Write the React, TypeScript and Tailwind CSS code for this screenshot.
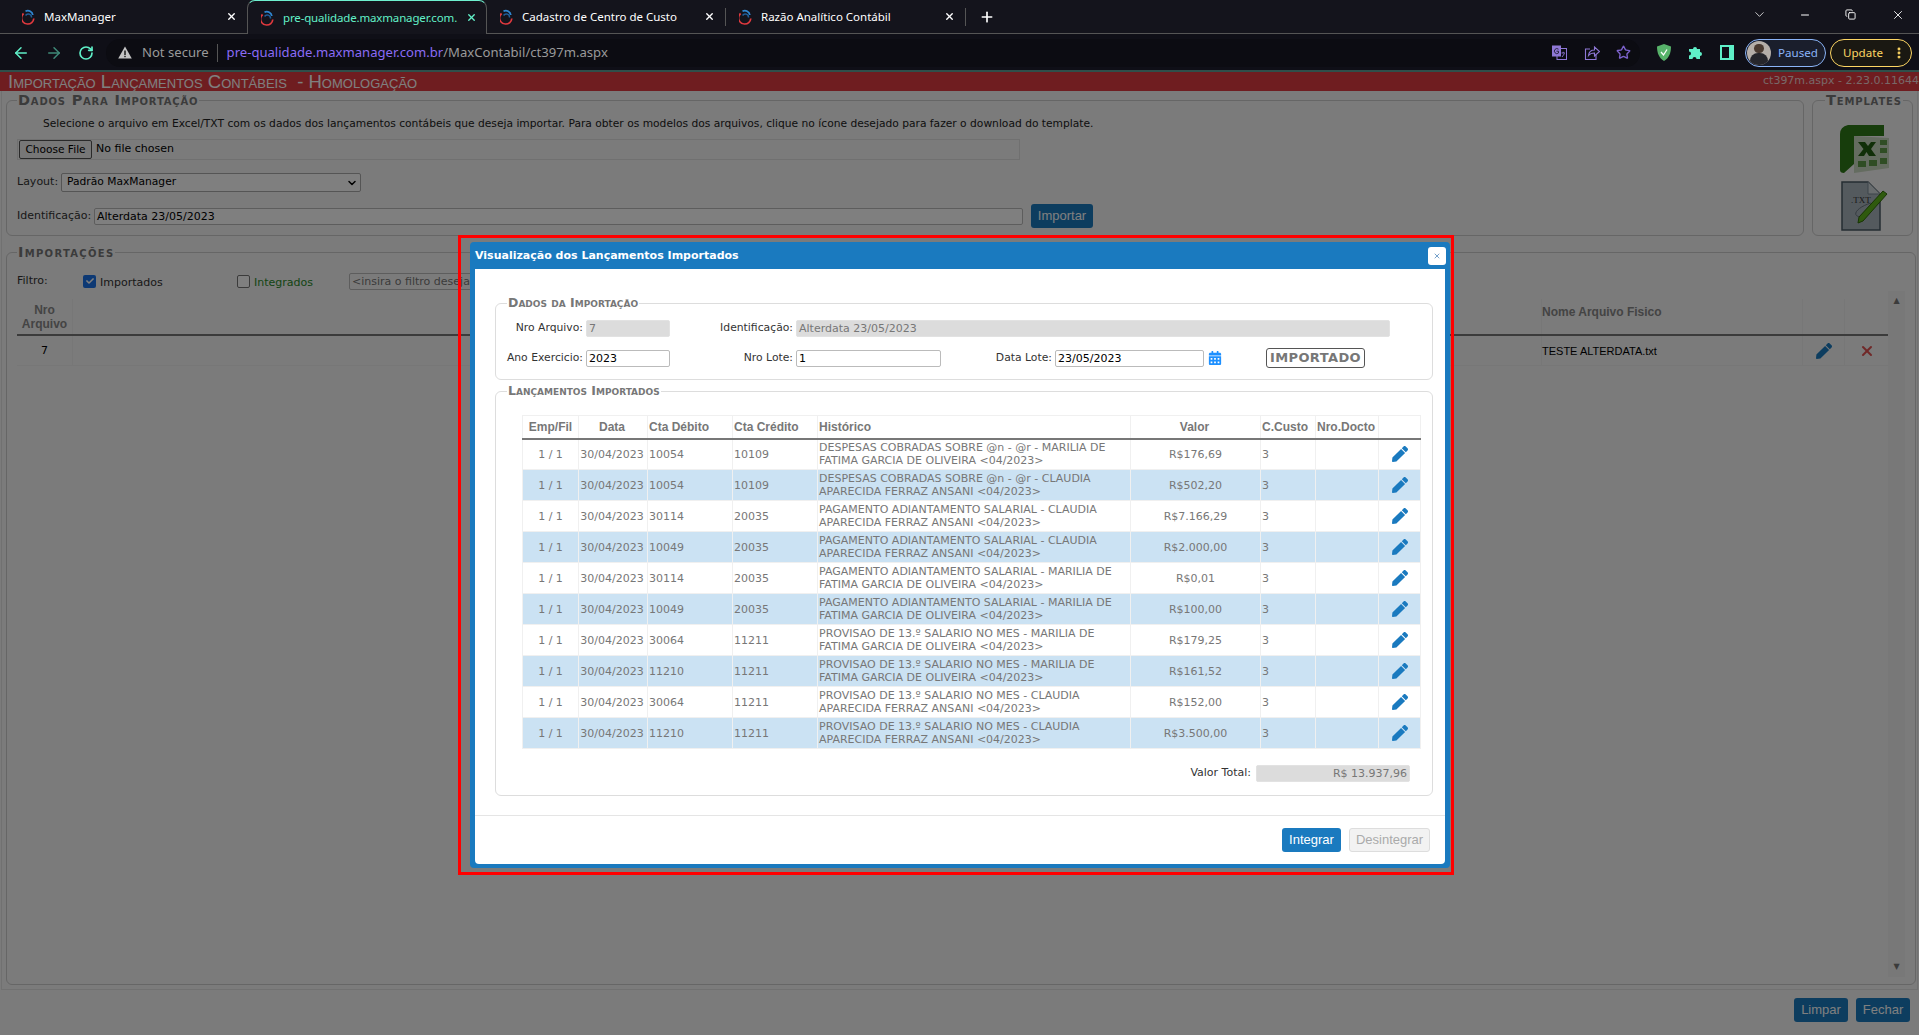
import { ArrowLeft, ArrowRight, RotateCw, Star, Plus, Minus, ChevronDown, X, Copy, EllipsisVertical } from "lucide-react"
import { FaPen, FaCalendarAlt, FaCheck } from "react-icons/fa"

const verdana = "font-['DejaVu_Sans',sans-serif]"

type Lanc = { deb: string; cred: string; hist: [string, string]; valor: string }

const marilia = "FATIMA GARCIA DE OLIVEIRA <04/2023>"
const claudia = "APARECIDA FERRAZ ANSANI <04/2023>"

const rows: Lanc[] = [
  { deb: "10054", cred: "10109", hist: ["DESPESAS COBRADAS SOBRE @n - @r - MARILIA DE", marilia], valor: "R$176,69" },
  { deb: "10054", cred: "10109", hist: ["DESPESAS COBRADAS SOBRE @n - @r - CLAUDIA", claudia], valor: "R$502,20" },
  { deb: "30114", cred: "20035", hist: ["PAGAMENTO ADIANTAMENTO SALARIAL - CLAUDIA", claudia], valor: "R$7.166,29" },
  { deb: "10049", cred: "20035", hist: ["PAGAMENTO ADIANTAMENTO SALARIAL - CLAUDIA", claudia], valor: "R$2.000,00" },
  { deb: "30114", cred: "20035", hist: ["PAGAMENTO ADIANTAMENTO SALARIAL - MARILIA DE", marilia], valor: "R$0,01" },
  { deb: "10049", cred: "20035", hist: ["PAGAMENTO ADIANTAMENTO SALARIAL - MARILIA DE", marilia], valor: "R$100,00" },
  { deb: "30064", cred: "11211", hist: ["PROVISAO DE 13.º SALARIO NO MES - MARILIA DE", marilia], valor: "R$179,25" },
  { deb: "11210", cred: "11211", hist: ["PROVISAO DE 13.º SALARIO NO MES - MARILIA DE", marilia], valor: "R$161,52" },
  { deb: "30064", cred: "11211", hist: ["PROVISAO DE 13.º SALARIO NO MES - CLAUDIA", claudia], valor: "R$152,00" },
  { deb: "11210", cred: "11211", hist: ["PROVISAO DE 13.º SALARIO NO MES - CLAUDIA", claudia], valor: "R$3.500,00" },
]

function Favicon() {
  return (
    <svg width="13" height="16" viewBox="0 0 13 16" fill="none" className="shrink-0">
      <path d="M3.5 2.2 A5 5 0 0 1 10.8 6" stroke="#2f86d0" strokeWidth="1.8" />
      <path d="M1.6 4.5 A6 6 0 0 0 5.5 15 A6 6 0 0 0 11.8 9.5" stroke="#e0393e" strokeWidth="1.7" />
      <path d="M9.5 8.5 A3.2 3.2 0 0 0 3.6 6.5" stroke="#1f5f9c" strokeWidth="1.5" />
    </svg>
  )
}

function Tab({ title, active, w, pl }: { title: string; active?: boolean; w: string; pl: string }) {
  return (
    <div className={`${w} ${pl} flex items-center relative ${active ? "h-[34px] bg-[#14141c] border-x border-t border-x-[#555] border-t-[#6ff0cf] rounded-t-lg pr-[9px]" : "h-[33px] pr-[10px]"}`}>
      <Favicon />
      <span className={`ml-[9px] text-[11.5px] flex-1 whitespace-nowrap font-['Noto_Sans',sans-serif] ${active ? "text-[#62f0c8] tracking-[-0.15px]" : "text-white"}`}>{title}</span>
      <X size={11} strokeWidth={3} className={active ? "text-[#62f0c8]" : "text-white"} />
    </div>
  )
}

function BrowserChrome() {
  return (
    <div className="shrink-0">
      <div className="h-[34px] bg-[#14141c] border-b border-[#555] flex items-start">
        <Tab title="MaxManager" w="w-[247px]" pl="pl-[22px]" />
        <Tab title="pre-qualidade.maxmanager.com." active w="w-[240px]" pl="pl-[13px]" />
        <Tab title="Cadastro de Centro de Custo" w="w-[238px]" pl="pl-[13px]" />
        <div className="w-px h-[18px] bg-[#555] mt-2" />
        <Tab title="Razão Analítico Contábil" w="w-[239px]" pl="pl-[13px]" />
        <div className="w-px h-[18px] bg-[#555] mt-2" />
        <Plus size={16} strokeWidth={2.5} className="text-white ml-[13px] mt-[9px]" />
        <div className="flex-1" />
        <div className="flex items-center text-white mt-[7px]">
          <ChevronDown size={15} strokeWidth={1.2} className="mr-[32px]" />
          <Minus size={12} className="mr-[34px]" />
          <Copy size={11} className="mr-[35px]" />
          <X size={14} strokeWidth={1.5} className="mr-[14px]" />
        </div>
      </div>
      <div className="h-[38px] bg-[#0f0f17] flex items-center pt-px border-b-2 border-[#2f4f4a]">
        <ArrowLeft size={18} className="text-[#5ff0c8] ml-[12px]" />
        <ArrowRight size={18} className="text-[#3f8a78] ml-[15px]" />
        <RotateCw size={16} strokeWidth={2.5} className="text-[#5ff0c8] ml-[15px]" />
        <div className="ml-[12px] w-[1534px] h-[28px] rounded-full bg-[#0c0c12] flex items-center pl-[12px]">
          <svg width="14" height="13" viewBox="0 0 14 13" className="shrink-0">
            <path d="M7 0.5 L13.8 12.5 H0.2 Z" fill="#c4c4c4" />
            <rect x="6.3" y="4.5" width="1.4" height="4.5" fill="#111" />
            <rect x="6.3" y="9.8" width="1.4" height="1.4" fill="#111" />
          </svg>
          <span className="ml-[10px] text-[13.1px] text-[#9a9a9a] font-['Noto_Sans',sans-serif]">Not secure</span>
          <div className="w-px h-[18px] bg-[#555] ml-[8px]" />
          <span className="ml-[9px] text-[13.1px] font-['Noto_Sans',sans-serif] text-[#9a9a9a]"><span className="text-[#8a6bf5]">pre-qualidade.maxmanager.com.br</span>/MaxContabil/ct397m.aspx</span>
          <div className="flex-1" />
          {/* translate */}
          <svg width="15" height="15" viewBox="0 0 15 15" className="mr-[17px]">
            <rect x="5" y="3.5" width="9.5" height="11" fill="none" stroke="#8f78d6" />
            <rect x="0" y="0.5" width="9" height="11" fill="#8f78d6" />
            <path d="M6.5 4.2 A2.5 2.5 0 1 0 6.5 8 V6.2 H4.5" fill="none" stroke="#2a2440" />
            <path d="M9.5 8 H13 M11.2 6.8 V8 M10 12 L12.5 8.5" fill="none" stroke="#8f78d6" strokeWidth="0.9" />
          </svg>
          {/* share */}
          <svg width="16" height="16" viewBox="0 0 16 16" fill="none" stroke="#8f78d6" strokeWidth="1.1" className="mr-[16px]">
            <path d="M6 4 H1.5 V14.5 H12 V10" />
            <path d="M4.5 10.5 C5 6.5 8 5 10.5 5 V2 L15.5 6.5 L10.5 11 V8 C8 8 6 8.5 4.5 10.5 Z" />
          </svg>
          <Star size={15} strokeWidth={2.2} className="text-[#7c62cc] mr-[9px]" />
        </div>
        <svg width="14" height="17" viewBox="0 0 14 17" className="ml-[17px]">
          <path d="M7 0 L14 2.5 C14 9 12 14 7 17 C2 14 0 9 0 2.5 Z" fill="#57b26a" />
          <path d="M4 8 L6.5 11 L10 5.5" stroke="#fff" strokeWidth="1.3" fill="none" />
        </svg>
        {/* extensions */}
        <svg width="15" height="15" viewBox="0 0 15 15" className="ml-[17px]">
          <path d="M1 4 H5 A2 2 0 1 1 9 4 H12 V7 A2 2 0 1 1 12 11 V14 H8.5 A2 2 0 1 0 4.5 14 H1 V10.5 A2 2 0 1 0 1 6.5 Z" fill="#5ff0c8" />
        </svg>
        <div className="ml-[17px] w-[14px] h-[15px] bg-[#5ff0c8] flex justify-start items-center pl-[2px]"><div className="w-[7px] h-[11px] bg-[#0f0f17]" /></div>
        <div className="ml-[11px] w-[81px] h-[28px] rounded-full border border-[#8ab4f8] bg-[#1a1e2c] flex items-center pl-[1px]">
          <div className="size-[24px] rounded-full bg-[#b5aea8] overflow-hidden flex flex-col items-center">
            <div className="size-[10px] rounded-full bg-[#4a3a30] mt-[3px]" />
            <div className="w-[18px] h-[12px] bg-[#26262c] rounded-t-lg" />
          </div>
          <span className="ml-[7px] text-[11.6px] text-[#8ab4f8] font-['Noto_Sans',sans-serif]">Paused</span>
        </div>
        <div className="ml-[4px] w-[82px] h-[28px] rounded-full border border-[#fdd663] bg-[#1a1812] flex items-center pl-[12px]">
          <span className="text-[11.6px] text-[#fdd663] font-['Noto_Sans',sans-serif]">Update</span>
          <EllipsisVertical size={14} strokeWidth={3} className="text-[#fdd663] ml-[9px]" />
        </div>
      </div>
    </div>
  )
}

function ExcelIcon() {
  return (
    <svg width="49" height="50" viewBox="0 0 49 50">
      <path d="M8 1 H44 V12 H14 V40 L4 49 Q0 49 0 46 V10 Q0 3 8 1 Z" fill="#2f7a18" />
      <path d="M14 12 L49 14 V44 L14 49 Z" fill="#c9d8c0" />
      <path d="M18 18 H25 L28 22 L31 18 H36 L31 25 L36 32 H29 L26.5 28 L24 32 H18 L23.5 25 Z" fill="#215f10" />
      <rect x="40" y="16" width="7" height="5" fill="#5f9a48" />
      <rect x="40" y="24" width="7" height="5" fill="#5f9a48" />
      <rect x="18" y="37" width="8" height="6" fill="#5f9a48" />
      <rect x="29" y="36" width="8" height="6" fill="#5f9a48" />
      <rect x="40" y="34" width="7" height="6" fill="#5f9a48" />
    </svg>
  )
}

function TxtIcon() {
  return (
    <svg width="47" height="50" viewBox="0 0 47 50">
      <path d="M1 1 H27 L39 13 V49 H1 Z" fill="#a8b4bc" stroke="#4a5a66" strokeWidth="1.5" />
      <path d="M27 1 V13 H39" fill="#d0d8dc" stroke="#7a8a94" />
      <text x="10" y="22" fontSize="9" fontFamily="Liberation Serif, serif" fill="#333">.TXT</text>
      <path d="M30 22 C16 26 8 36 22 36" fill="none" stroke="#6a7680" />
      <path d="M18 36 L42 10 L46 13 L22 40 L17 42 Z" fill="#5fb51c" stroke="#2f6a08" />
    </svg>
  )
}

function Legend({ children, size, ml }: { children: string; size: string; ml: string }) {
  return <legend className={`${size} ${ml} px-px leading-[14px] font-bold [font-variant:small-caps] text-[#777] ${verdana}`}>{children}</legend>
}

function Field({ value, w, disabled, right }: { value: string; w: string; disabled?: boolean; right?: boolean }) {
  return (
    <div className={`${w} h-[17px] rounded-[2px] px-[2px] text-[11px] leading-[15px] whitespace-nowrap overflow-hidden border ${disabled ? "bg-[#dcdcdc] border-[#e2e2e2] text-[#777]" : "bg-white border-[#bbb] text-black"} ${right ? "text-right" : ""}`}>{value}</div>
  )
}

function BackPage() {
  const btn = "w-[54px] h-[24px] rounded-[3px] bg-[#1a7abf] text-white text-center leading-[24px] text-[13px] font-['Liberation_Sans',sans-serif]"
  return (
    <div className={`h-full flex flex-col bg-[#f6f6f6] text-[11px] text-[#333] ${verdana}`}>
      <div className="h-[19px] bg-[#de3a40] flex items-center justify-between shrink-0">
        <span className="ml-[8px] text-[18.5px] leading-[19px] [font-variant:small-caps] text-white font-['Liberation_Sans',sans-serif]">Importação Lançamentos Contábeis&nbsp; - Homologação</span>
        <span className="text-[11px] text-[#f0d0d0]">ct397m.aspx - 2.23.0.11644</span>
      </div>

      <div className="flex-1 mx-px border border-t-0 border-[#e2e2e2] px-[4px] flex flex-col gap-[9px] min-h-0">
        <div className="flex gap-[8px] h-[145px] pt-[2px] shrink-0">
          <fieldset className="flex-1 border border-[#ccc] rounded-md pl-[10px] pt-[10px]">
            <Legend size="text-[14.5px] tracking-[0.8px]" ml="ml-0">Dados Para Importação</Legend>
            <p className="ml-[26px] text-[10.7px] leading-[14px] text-[#222]">Selecione o arquivo em Excel/TXT com os dados dos lançamentos contábeis que deseja importar. Para obter os modelos dos arquivos, clique no ícone desejado para fazer o download do template.</p>
            <div className="mt-[8px] w-[1003px] h-[21px] border border-[#e0e0e0] flex items-center pl-px">
              <div className="w-[73px] h-[19px] bg-[#efefef] border border-[#555] rounded-[2px] text-center text-black text-[10.6px] leading-[17px]">Choose File</div>
              <span className="ml-[4px] text-black">No file chosen</span>
            </div>
            <div className="mt-[13px] flex items-center">
              <span className="w-[44px]">Layout:</span>
              <div className="w-[300px] h-[19px] bg-white border border-[#aaa] rounded-[2px] flex items-center justify-between pl-[5px] pr-[2px] text-[10.7px] text-black">Padrão MaxManager<ChevronDown size={12} strokeWidth={3} /></div>
            </div>
            <div className="mt-[12px] flex items-center">
              <span className="w-[77px]">Identificação:</span>
              <div className="w-[929px]"><Field value="Alterdata 23/05/2023" w="w-full" /></div>
              <div className="ml-[8px] w-[62px] h-[24px] rounded-[3px] bg-[#1a7abf] text-white text-center leading-[24px] text-[13px] font-['Liberation_Sans',sans-serif]">Importar</div>
            </div>
          </fieldset>
          <fieldset className="w-[101px] border border-[#ccc] rounded-md flex flex-col items-center">
            <Legend size="text-[14.5px] tracking-[0.85px]" ml="ml-[12px]">Templates</Legend>
            <div className="flex flex-col items-center gap-[7px] mt-[17px] ml-[3px]">
              <ExcelIcon />
              <TxtIcon />
            </div>
          </fieldset>
        </div>

        <fieldset className="h-[740px] border border-[#ccc] rounded-md pl-[10px] pr-[10px] relative">
          <Legend size="text-[14.5px] tracking-[1.3px]" ml="ml-0">Importações</Legend>
          <div className="flex items-center h-[19px] mt-[13px]">
            <span className="w-[66px]">Filtro:</span>
            <div className="size-[13px] -mt-px bg-[#1a73e8] rounded-[2px] flex items-center justify-center"><FaCheck size={8} className="text-white" /></div>
            <span className="ml-[4px] w-[137px] mt-[3px]">Importados</span>
            <div className="size-[13px] -mt-px bg-white border border-[#777] rounded-[2px]" />
            <span className="ml-[4px] w-[95px] mt-[3px] text-[#2a8a2a]">Integrados</span>
            <div className="w-[200px] h-[17px] border border-[#bbb] rounded-[2px] bg-[#f6f6f6] text-[#777] px-[2px] leading-[15px] whitespace-nowrap overflow-hidden">&lt;insira o filtro desejado&gt;</div>
          </div>
          <div className="flex mt-[8px]">
            <div className="w-[1871px]">
              <div className="h-[37px] flex border-b-2 border-[#777] font-bold text-[#888] text-[12px] font-['Liberation_Sans',sans-serif]">
                <div className="w-[56px] text-center border-r border-[#eee] leading-[14px] pt-[4px]">Nro<br />Arquivo</div>
                <div className="w-[1469px] border-r border-[#eee]" />
                <div className="w-[261px] pt-[4px] border-r border-[#eee]">Nome Arquivo Fisico</div>
                <div className="w-[42px] border-r border-[#eee]" />
                <div className="w-[43px]" />
              </div>
              <div className="h-[30px] flex items-center border-b border-[#eee] text-black">
                <div className="w-[56px] text-center border-r border-[#eee] h-full leading-[30px]">7</div>
                <div className="w-[1469px] border-r border-[#eee] h-full" />
                <div className="w-[261px] leading-[30px] border-r border-[#eee] h-full font-['Liberation_Sans',sans-serif]">TESTE ALTERDATA.txt</div>
                <div className="w-[42px] border-r border-[#eee] h-full flex items-center justify-center"><FaPen size={16} className="text-[#1a7abf]" /></div>
                <div className="w-[43px] flex items-center justify-center"><X size={16} strokeWidth={3} className="text-[#e05050]" /></div>
              </div>
            </div>
            <div className="w-[17px] h-[686px] -mt-[8px] bg-[#f0f0f0] flex flex-col justify-between items-center py-[6px] text-[#777] text-[8px] leading-none">
              <span>▲</span>
              <span>▼</span>
            </div>
          </div>
        </fieldset>
      </div>

      <div className="h-[45px] shrink-0 flex justify-end items-start pt-[8px] gap-[8px] pr-[9px]">
        <div className={btn}>Limpar</div>
        <div className={btn}>Fechar</div>
      </div>
    </div>
  )
}

function ImportModal() {
  const th = "border border-[#f0f0f0] border-b-2 border-b-[#777] font-bold text-[12px] text-[#777] font-['Liberation_Sans',sans-serif]"
  const td = "border border-[#f0f0f0] text-[11px] text-[#777] leading-[13px]"
  const label = "text-right mr-[3px] text-[10.8px]"
  return (
    <div className={`absolute left-[470px] top-[170px] w-[980px] h-[626px] bg-[#1a7abf] rounded-[4px] flex flex-col px-[5px] pb-[4px] ${verdana}`}>
      <div className="h-[27px] shrink-0 flex items-center justify-between">
        <span className="pt-[2px] font-bold text-[11px] text-white">Visualização dos Lançamentos Importados</span>
        <div className="size-[18px] -mr-px bg-white rounded-[3px] flex items-center justify-center"><X size={8} strokeWidth={2.5} className="text-[#5a8fc0]" /></div>
      </div>
      <div className="flex-1 bg-white rounded-b-[4px] flex flex-col text-[11px] text-[#333]">
        <div className="flex-1 pl-[20px] pr-[12px]">
          <fieldset className="mt-[27px] h-[84px] border border-[#ddd] rounded-md">
            <Legend size="text-[12.5px]" ml="ml-[11px]">Dados da Importação</Legend>
            <div className="flex items-center mt-[10px]">
              <span className={`w-[87px] ${label}`}>Nro Arquivo:</span>
              <Field value="7" w="w-[84px]" disabled />
              <span className={`w-[123px] ${label}`}>Identificação:</span>
              <Field value="Alterdata 23/05/2023" w="w-[594px]" disabled />
            </div>
            <div className="flex items-center mt-[11px]">
              <span className={`w-[87px] ${label}`}>Ano Exercicio:</span>
              <Field value="2023" w="w-[84px]" />
              <span className={`w-[123px] ${label}`}>Nro Lote:</span>
              <Field value="1" w="w-[145px]" />
              <span className={`w-[111px] ${label}`}>Data Lote:</span>
              <Field value="23/05/2023" w="w-[149px]" />
              <FaCalendarAlt size={14} className="ml-[4px] text-[#1e90ff]" />
              <div className="ml-[44px] w-[99px] h-[20px] border border-[#555] rounded-[3px] text-center text-[13px] leading-[18px] font-bold text-[#777] tracking-[0.4px]">IMPORTADO</div>
            </div>
          </fieldset>
          <fieldset className="mt-[4px] h-[412px] border border-[#ddd] rounded-md">
            <Legend size="text-[12.5px]" ml="ml-[11px]">Lançamentos Importados</Legend>
            <table className="ml-[26px] mt-[17px] w-[898px] table-fixed border-collapse">
              <colgroup>
                <col className="w-[56px]" />
                <col className="w-[69px]" />
                <col className="w-[85px]" />
                <col className="w-[85px]" />
                <col className="w-[313px]" />
                <col className="w-[130px]" />
                <col className="w-[55px]" />
                <col className="w-[63px]" />
                <col className="w-[42px]" />
              </colgroup>
              <thead>
                <tr className="h-[23px]">
                  <th className={th}>Emp/Fil</th>
                  <th className={`${th} pr-[2px]`}>Data</th>
                  <th className={`${th} text-left pl-px`}>Cta Débito</th>
                  <th className={`${th} text-left pl-px`}>Cta Crédito</th>
                  <th className={`${th} text-left pl-px`}>Histórico</th>
                  <th className={`${th} pr-[2px]`}>Valor</th>
                  <th className={`${th} text-left pl-px`}>C.Custo</th>
                  <th className={`${th} text-left pl-px`}>Nro.Docto</th>
                  <th className={th}></th>
                </tr>
              </thead>
              <tbody>
                {rows.map((r, i) => (
                  <tr key={i} className={`h-[31px] ${i % 2 ? "bg-[#cbe2f3]" : "bg-white"}`}>
                    <td className={`${td} text-center`}>1 / 1</td>
                    <td className={`${td} text-center pr-[2px]`}>30/04/2023</td>
                    <td className={`${td} pl-px`}>{r.deb}</td>
                    <td className={`${td} pl-px`}>{r.cred}</td>
                    <td className={`${td} pl-px pb-px whitespace-nowrap`}>{r.hist[0]}<br />{r.hist[1]}</td>
                    <td className={`${td} text-center`}>{r.valor}</td>
                    <td className={`${td} pl-px`}>3</td>
                    <td className={td}></td>
                    <td className={td}><FaPen size={16} className="mx-auto text-[#1a7abf]" /></td>
                  </tr>
                ))}
              </tbody>
            </table>
            <div className="flex items-center justify-end mt-[16px] mr-[22px]">
              <span className="mr-[5px]">Valor Total:</span>
              <Field value="R$ 13.937,96" w="w-[154px]" disabled right />
            </div>
          </fieldset>
        </div>
        <div className="h-[49px] shrink-0 border-t border-[#e5e5e5] flex items-center justify-end pr-[15px] gap-[8px] font-['Liberation_Sans',sans-serif] text-[13px]">
          <div className="w-[59px] h-[24px] rounded-[3px] bg-[#1a7abf] text-white text-center leading-[24px]">Integrar</div>
          <div className="w-[81px] h-[24px] rounded-[3px] bg-[#f2f2f2] border border-[#ddd] text-[#aaa] text-center leading-[22px]">Desintegrar</div>
        </div>
      </div>
    </div>
  )
}

export default function App() {
  return (
    <div className="w-[1919px] h-[1035px] flex flex-col overflow-hidden relative">
      <BrowserChrome />
      <div className="flex-1 relative min-h-0">
        <BackPage />
        {/* dim layer behind the modal */}
        <div className="absolute inset-0 bg-black/50" />
        <ImportModal />
        {/* red highlight around the modal */}
        <div className="absolute left-[458px] top-[163px] w-[996px] h-[640px] border-[3.5px] border-[#f00]" />
      </div>
    </div>
  )
}
